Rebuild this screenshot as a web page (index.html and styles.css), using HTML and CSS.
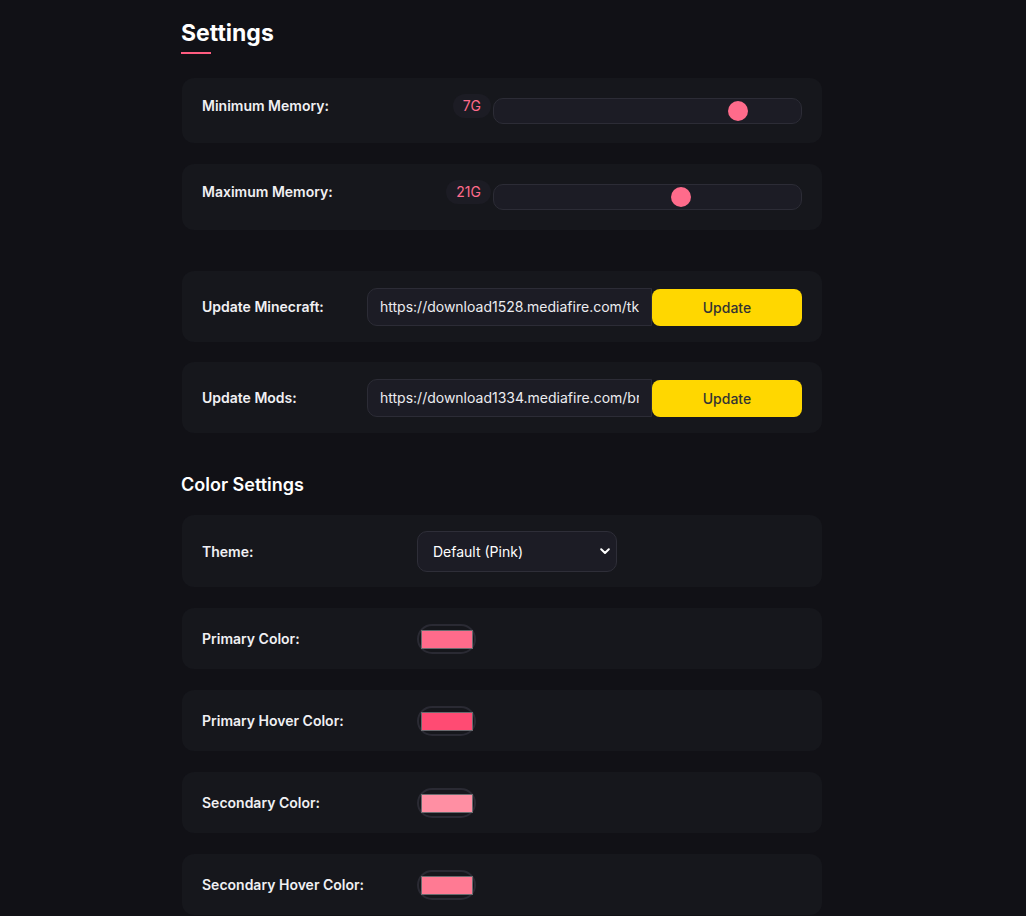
FILE: index.html
```html
<!DOCTYPE html>
<html lang="en">
<head>
<meta charset="utf-8">
<title>Settings</title>
<link rel="stylesheet" href="styles.css">
</head>
<body>
<main class="page">
  <h1 class="title">Settings</h1>

  <section class="group group-mem">
    <div class="card card-mem">
      <span class="label">Minimum Memory:</span>
      <span class="badge">7G</span>
      <div class="track"><span class="thumb" style="left: 79.5%"></span></div>
    </div>
    <div class="card card-mem">
      <span class="label">Maximum Memory:</span>
      <span class="badge">21G</span>
      <div class="track"><span class="thumb" style="left: 60.9%"></span></div>
    </div>
  </section>

  <section class="group group-update">
    <div class="card card-update">
      <span class="label label-update">Update Minecraft:</span>
      <div class="url"><span class="url-text">https://download1528.mediafire.com/tkq8xj2ab9/minecraft.zip</span></div>
      <button class="btn">Update</button>
    </div>
    <div class="card card-update">
      <span class="label label-update">Update Mods:</span>
      <div class="url"><span class="url-text">https://download1334.mediafire.com/br7x0qk3e/mods.zip</span></div>
      <button class="btn">Update</button>
    </div>
  </section>

  <h2 class="subtitle">Color Settings</h2>

  <section class="group group-color">
    <div class="card card-theme">
      <span class="label label-color">Theme:</span>
      <div class="select">
        <span>Default (Pink)</span>
        <svg class="chev" width="10" height="7" viewBox="0 0 10 7"><path d="M1.2 1.3 L5 5 L8.8 1.3" fill="none" stroke="#ffffff" stroke-width="2" stroke-linecap="round" stroke-linejoin="round"/></svg>
      </div>
    </div>

    <div class="card card-color">
      <span class="label label-color">Primary Color:</span>
      <div class="picker"><span class="swatch" style="background:#ff6b8b"></span></div>
    </div>
    <div class="card card-color">
      <span class="label label-color">Primary Hover Color:</span>
      <div class="picker"><span class="swatch" style="background:#ff4b73"></span></div>
    </div>
    <div class="card card-color">
      <span class="label label-color">Secondary Color:</span>
      <div class="picker"><span class="swatch" style="background:#ff8fa3"></span></div>
    </div>
    <div class="card card-color">
      <span class="label label-color">Secondary Hover Color:</span>
      <div class="picker"><span class="swatch" style="background:#ff7a93"></span></div>
    </div>
  </section>
</main>
</body>
</html>
```

FILE: styles.css
```css
* { box-sizing: border-box; }

body {
  margin: 0;
  background: #111116;
  color: #f2f2f5;
  font-family: Inter, "Noto Sans", "Liberation Sans", sans-serif;
}

.page {
  width: 640px;
  margin-left: 182px;
  padding-top: 18px;
  display: flex;
  flex-direction: column;
}

.title {
  margin: 0 0 24px -1px;
  font-size: 23px;
  line-height: 30px;
  font-weight: 700;
  color: #ffffff;
}

.title::after {
  content: "";
  display: block;
  width: 30px;
  height: 2px;
  margin-top: 4px;
  background: #ff5c80;
}

.group {
  display: flex;
  flex-direction: column;
}

.group-mem { gap: 21px; margin-bottom: 41px; }
.group-update { gap: 20px; margin-bottom: 40px; }
.group-color { gap: 21px; padding-bottom: 20px; }

.card {
  display: flex;
  background: #16171c;
  border-radius: 12px;
}

.label {
  font-size: 14px;
  font-weight: 600;
  line-height: 24px;
  color: #f0f0f3;
}

.card-mem {
  align-items: flex-start;
  padding: 16px 20px 19px;
}

.card-mem + .card-mem { padding-bottom: 20px; }

.badge {
  margin-left: auto;
  margin-right: 2px;
  height: 24px;
  line-height: 24px;
  padding: 0 10px;
  border-radius: 12px;
  background: #1c1c24;
  color: #ff6b8b;
  font-size: 14px;
}

.track {
  position: relative;
  width: 309px;
  height: 26px;
  margin-top: 4px;
  background: #1c1c25;
  border: 1px solid #2c2c36;
  border-radius: 10px;
}

.thumb {
  position: absolute;
  top: 2px;
  width: 20px;
  height: 20px;
  margin-left: -10px;
  border-radius: 50%;
  background: #ff6b8b;
}

.card-update {
  align-items: center;
  padding: 17px 20px 16px;
}

.label-update { width: 165px; flex: none; }

.url {
  flex: 1;
  min-width: 0;
  height: 38px;
  padding: 0 12px;
  background: #1c1c25;
  border: 1px solid #2c2c36;
  border-radius: 10px 0 0 10px;
}

.url-text {
  display: block;
  line-height: 36px;
  color: #ececf0;
  font-size: 14px;
  white-space: nowrap;
  overflow: hidden;
}

.btn {
  flex: none;
  width: 150px;
  height: 37px;
  border: none;
  border-radius: 8px;
  background: #ffd700;
  color: #333333;
  font-family: inherit;
  font-size: 14px;
  font-weight: 500;
}

.subtitle {
  margin: 0 0 18px -1px;
  font-size: 18px;
  line-height: 24px;
  font-weight: 600;
  color: #ffffff;
}

.label-color { width: 215px; flex: none; }

.card-theme {
  align-items: center;
  padding: 16px 20px 15px;
}

.select {
  display: flex;
  align-items: center;
  justify-content: space-between;
  width: 200px;
  height: 41px;
  padding: 0 6px 0 15px;
  background: #1c1c25;
  border: 1px solid #2e2e38;
  border-radius: 10px;
  font-size: 14px;
  color: #ffffff;
}

.card-color {
  align-items: center;
  padding: 16px 20px 15px;
}

.picker {
  display: flex;
  align-items: center;
  justify-content: center;
  width: 59px;
  height: 30px;
  border: 2px solid #2a2a33;
  border-radius: 15px;
  background: #16171c;
}

.swatch {
  display: block;
  width: 52px;
  height: 19px;
  border: 1px solid #6a6a6e;
}
```
